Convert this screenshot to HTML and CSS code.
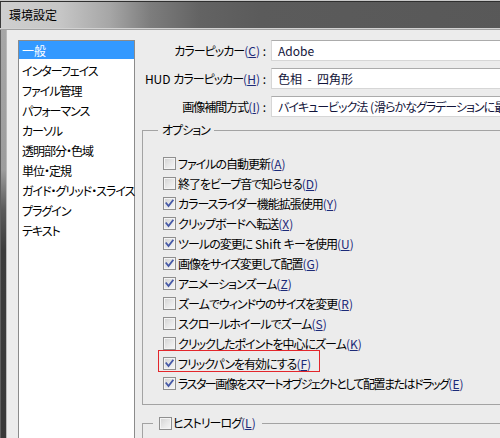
FILE: index.html
```html
<!DOCTYPE html>
<html lang="ja">
<head>
<meta charset="utf-8">
<title>環境設定</title>
<link rel="stylesheet" href="styles.css">
</head>
<body>
<div class="window">
  <div class="titlebar"><span class="title">環境設定</span></div>
  <div class="frame">
    <div class="edge"></div>
    <div class="content">
      <ul class="nav">
        <li class="selected">一般</li>
        <li>インターフェイス</li>
        <li>ファイル管理</li>
        <li>パフォーマンス</li>
        <li>カーソル</li>
        <li>透明部分・色域</li>
        <li>単位・定規</li>
        <li>ガイド・グリッド・スライス</li>
        <li>プラグイン</li>
        <li>テキスト</li>
      </ul>
      <div class="panel">
        <div class="form">
          <div class="lbl">カラーピッカー<span class="mn">(<u>C</u>)</span><span class="lat"> :</span></div>
          <div class="field"><span class="lat">Adobe</span></div>
          <div class="lbl"><span class="lat">HUD </span>カラーピッカー<span class="mn">(<u>H</u>)</span><span class="lat"> :</span></div>
          <div class="field"><span class="lat">色相 &nbsp;- &nbsp;四角形</span></div>
          <div class="lbl">画像補間方式<span class="mn">(<u>I</u>)</span><span class="lat"> :</span></div>
          <div class="field">バイキュービック法<span class="lat"> (</span>滑らかなグラデーションに最適)</div>
        </div>
        <fieldset class="group options">
          <legend>オプション</legend>
          <div class="rows">
            <div class="opt"><span class="opt-inner"><span class="cb"></span><span>ファイルの自動更新<span class="mn">(<u>A</u>)</span></span></span></div>
            <div class="opt"><span class="opt-inner"><span class="cb"></span><span>終了をビープ音で知らせる<span class="mn">(<u>D</u>)</span></span></span></div>
            <div class="opt"><span class="opt-inner"><span class="cb"><svg class="tick" viewBox="0 0 11 11"><path d="M2.3 5.2 L4.5 8 L8.8 2.4"/></svg></span><span>カラースライダー機能拡張使用<span class="mn">(<u>Y</u>)</span></span></span></div>
            <div class="opt"><span class="opt-inner"><span class="cb"><svg class="tick" viewBox="0 0 11 11"><path d="M2.3 5.2 L4.5 8 L8.8 2.4"/></svg></span><span>クリップボードへ転送<span class="mn">(<u>X</u>)</span></span></span></div>
            <div class="opt"><span class="opt-inner"><span class="cb"><svg class="tick" viewBox="0 0 11 11"><path d="M2.3 5.2 L4.5 8 L8.8 2.4"/></svg></span><span>ツールの変更に<span class="lat"> Shift </span>キーを使用<span class="mn">(<u>U</u>)</span></span></span></div>
            <div class="opt"><span class="opt-inner"><span class="cb"><svg class="tick" viewBox="0 0 11 11"><path d="M2.3 5.2 L4.5 8 L8.8 2.4"/></svg></span><span>画像をサイズ変更して配置<span class="mn">(<u>G</u>)</span></span></span></div>
            <div class="opt"><span class="opt-inner"><span class="cb"><svg class="tick" viewBox="0 0 11 11"><path d="M2.3 5.2 L4.5 8 L8.8 2.4"/></svg></span><span>アニメーションズーム<span class="mn">(<u>Z</u>)</span></span></span></div>
            <div class="opt"><span class="opt-inner"><span class="cb"></span><span>ズームでウィンドウのサイズを変更<span class="mn">(<u>R</u>)</span></span></span></div>
            <div class="opt"><span class="opt-inner"><span class="cb"></span><span>スクロールホイールでズーム<span class="mn">(<u>S</u>)</span></span></span></div>
            <div class="opt"><span class="opt-inner"><span class="cb"></span><span>クリックしたポイントを中心にズーム<span class="mn">(<u>K</u>)</span></span></span></div>
            <div class="opt"><span class="opt-inner flag"><span class="cb"><svg class="tick" viewBox="0 0 11 11"><path d="M2.3 5.2 L4.5 8 L8.8 2.4"/></svg></span><span>フリックパンを有効にする<span class="mn">(<u>F</u>)</span></span></span></div>
            <div class="opt"><span class="opt-inner"><span class="cb"><svg class="tick" viewBox="0 0 11 11"><path d="M2.3 5.2 L4.5 8 L8.8 2.4"/></svg></span><span class="tight">ラスター画像をスマートオブジェクトとして配置またはドラッグ</span><span class="mn">(<u>E</u>)</span></span></div>
          </div>
        </fieldset>
        <fieldset class="group history">
          <legend><span class="cb"></span><span class="legend-text">ヒストリーログ<span class="mn">(<u>L</u>)</span></span></legend>
          <div class="history-body"></div>
        </fieldset>
      </div>
    </div>
  </div>
</div>
</body>
</html>
```

FILE: styles.css
```css
* { box-sizing: border-box; }
html, body { margin: 0; padding: 0; }
body {
  width: 500px;
  height: 438px;
  overflow: hidden;
  background: #ececec;
  font-family: "Noto Sans CJK JP", "Noto Sans", sans-serif;
  font-size: 12px;
  color: #000;
  font-feature-settings: "palt" 1;
  letter-spacing: -1px;
}
.lat { letter-spacing: 0; white-space: pre; }
.tight { letter-spacing: -1.5px; }
.mn { color: #1c2a78; letter-spacing: 0; }
.mn u { text-decoration: underline; text-underline-offset: 1px; }
.window {
  width: 520px;
  height: 470px;
  display: flex;
  flex-direction: column;
}
.titlebar {
  height: 30px;
  flex: none;
  border-top: 1px solid #c9c9c9;
  border-bottom: 1px solid #a2a2a2;
  box-shadow: inset 0 1px 0 #2f2f2f, inset 0 -1px 0 #d2d2d2, inset 1px 0 0 #3a3a3a;
  background: linear-gradient(to right, #cfcfcf 0, #c6c6c6 60px, #a6a6a6 110px, #7d7d7d 150px, #636363 200px, #5b5b5b 260px, #585858 100%);
}
.title {
  display: block;
  padding-left: 9px;
  line-height: 28px;
  font-size: 12px;
  letter-spacing: 0;
  color: #000;
}
.frame {
  flex: 1;
  display: flex;
  min-height: 0;
}
.edge {
  width: 7px;
  flex: none;
  background:
    linear-gradient(to right, #5e5e5e 0 1px, transparent 1px 6px, #b9b9b9 6px 7px),
    linear-gradient(#a6a6a6 0, #9c9c9c 140px, #5a5a5a 180px, #3c3c3c 220px, #383838 100%);
}
.content {
  flex: 1;
  display: flex;
  padding: 10px 0 0 11px;
  background: #ececec;
  min-width: 0;
}
.nav {
  list-style: none;
  margin: 0;
  padding: 0;
  width: 117px;
  flex: none;
  background: #fff;
  border: 1px solid #8b8b8b;
}
.nav li {
  height: 20px;
  line-height: 20px;
  padding-left: 3px;
  white-space: nowrap;
}
.nav li.selected {
  color: #fff;
  background: linear-gradient(#3399ff, #3399ff) 0 0 / 100% 18px no-repeat;
  line-height: 19px;
  letter-spacing: 0;
}
.panel {
  flex: 1;
  min-width: 0;
  display: flex;
  flex-direction: column;
}
.form {
  display: grid;
  grid-template-columns: 136px 1fr;
  grid-auto-rows: 21px;
  row-gap: 7px;
}
.lbl {
  text-align: right;
  padding-right: 5px;
  line-height: 21px;
  white-space: nowrap;
}
.field {
  background: #fff;
  border: 1px solid #d6d6d6;
  border-top-color: #ababab;
  border-right: none;
  padding-left: 6px;
  line-height: 19px;
  color: #12143a;
  white-space: nowrap;
  overflow: hidden;
}
.group {
  margin: 5px 0 0 7px;
  padding: 0;
  border: 1px solid #a3a3a3;
  min-width: 0;
}
.options legend {
  margin-left: 15px;
  padding: 0 4px;
  line-height: 16px;
}
.rows {
  padding: 15px 0 11px 20px;
}
.opt {
  height: 20px;
  display: flex;
  align-items: center;
}
.opt-inner {
  display: flex;
  align-items: center;
  height: 20px;
  position: relative;
  white-space: nowrap;
}
.cb {
  width: 13px;
  height: 13px;
  flex: none;
  display: inline-block;
  margin-right: 2px;
  border: 1px solid #8f8f8f;
  box-shadow: inset 0 0 0 1px #f4f4f4;
  background: linear-gradient(135deg, #d2d2d2 0%, #e8e8e8 55%, #f7f7f7 100%);
}
.tick {
  display: block;
  width: 11px;
  height: 11px;
}
.tick path {
  fill: none;
  stroke: #4558a6;
  stroke-width: 1.8;
  stroke-linecap: square;
}
.flag::after {
  content: "";
  position: absolute;
  left: -5px;
  right: -9px;
  top: -3px;
  bottom: 1px;
  border: 1px solid #e3262b;
}
.history {
  margin-top: 10px;
  border-right: none;
  border-bottom: none;
  height: 60px;
}
.history legend {
  margin-left: 10px;
  padding: 0 6px;
  line-height: 16px;
  white-space: nowrap;
}
.history .cb {
  vertical-align: -2px;
  margin-right: 1px;
}
.history-body {
  height: 30px;
}
```
